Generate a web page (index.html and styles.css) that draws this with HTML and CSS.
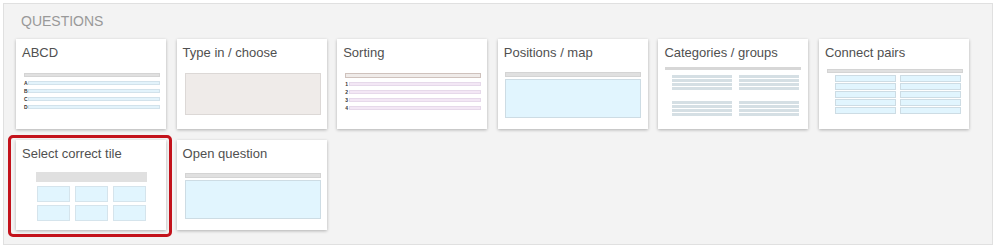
FILE: index.html
```html
<!DOCTYPE html>
<html lang="en">
<head>
  <meta charset="UTF-8" />
  <title>Questions</title>
  <link rel="stylesheet" href="styles.css">
</head>
<body>
  <div class="panel">
    <div class="panel-title">QUESTIONS</div>
    <div class="cards">

      <div class="card">
        <div class="title">ABCD</div>
        <div class="thumb abcd">
          <div class="bar gray"></div>
          <div class="opt"><span>A</span><div class="line blue"></div></div>
          <div class="opt"><span>B</span><div class="line blue"></div></div>
          <div class="opt"><span>C</span><div class="line blue"></div></div>
          <div class="opt"><span>D</span><div class="line blue"></div></div>
        </div>
      </div>

      <div class="card">
        <div class="title">Type in / choose</div>
        <div class="thumb typein">
          <div class="box beige"></div>
        </div>
      </div>

      <div class="card">
        <div class="title">Sorting</div>
        <div class="thumb sorting">
          <div class="bar beige-bar"></div>
          <div class="opt"><span>1</span><div class="line purple"></div></div>
          <div class="opt"><span>2</span><div class="line purple"></div></div>
          <div class="opt"><span>3</span><div class="line purple"></div></div>
          <div class="opt"><span>4</span><div class="line purple"></div></div>
        </div>
      </div>

      <div class="card">
        <div class="title">Positions / map</div>
        <div class="thumb positions">
          <div class="bar gray"></div>
          <div class="box blue-box"></div>
        </div>
      </div>

      <div class="card">
        <div class="title">Categories / groups</div>
        <div class="thumb categories">
          <div class="bar thin-gray"></div>
          <div class="groups">
            <div class="group"><i></i><i></i><i></i><i></i></div>
            <div class="group"><i></i><i></i><i></i><i></i></div>
            <div class="group"><i></i><i></i><i></i><i></i></div>
            <div class="group"><i></i><i></i><i></i><i></i></div>
          </div>
        </div>
      </div>

      <div class="card">
        <div class="title">Connect pairs</div>
        <div class="thumb pairs">
          <div class="bar gray"></div>
          <div class="pair-cols">
            <div class="pair-col"><i></i><i></i><i></i><i></i><i></i></div>
            <div class="pair-col"><i></i><i></i><i></i><i></i><i></i></div>
          </div>
        </div>
      </div>

      <div class="card selected">
        <div class="title">Select correct tile</div>
        <div class="thumb tiles">
          <div class="tile-head"></div>
          <div class="tile-grid">
            <i></i><i></i><i></i><i></i><i></i><i></i>
          </div>
        </div>
      </div>

      <div class="card">
        <div class="title">Open question</div>
        <div class="thumb open">
          <div class="bar gray"></div>
          <div class="box blue-box"></div>
        </div>
      </div>

    </div>
  </div>
</body>
</html>
```

FILE: styles.css
```css
body {
  margin: 0;
  background: #fff;
  font-family: "Liberation Sans", Arial, sans-serif;
}
.panel {
  margin: 3px;
  width: 990px;
  height: 242px;
  box-sizing: border-box;
  background: #f3f3f3;
  border: 1px solid #e0e0e0;
  padding: 9px 12px 0;
}
.panel-title {
  font-size: 14px;
  line-height: 16px;
  color: #999;
  margin: 0 0 10px 5px;
}
.cards {
  display: grid;
  grid-template-columns: repeat(6, 150px);
  column-gap: 10.6px;
  row-gap: 11px;
}
.card {
  position: relative;
  height: 90px;
  box-sizing: border-box;
  background: #fff;
  padding-top: 6px;
  box-shadow: 0 1px 3px rgba(0, 0, 0, 0.28);
}
.card.selected::after {
  content: "";
  position: absolute;
  left: -8px;
  right: -6px;
  top: -5px;
  bottom: -7px;
  border: 3px solid #c3121b;
  border-radius: 5px;
}
.title {
  font-size: 13px;
  line-height: 15px;
  color: #505050;
  padding: 0 5px 0 6px;
}
.thumb {
  margin: 13px 6px 0 8px;
}
.bar {
  box-sizing: border-box;
  height: 4px;
}
.gray {
  background: #e0e0e0;
  border: 1px solid #d4d4d4;
}
.beige-bar {
  height: 5px;
  background: #efebe9;
  border: 1px solid #cfc2bd;
}
.thin-gray {
  height: 3px;
  background: #d7d7d7;
}
.opt {
  display: flex;
  align-items: center;
  margin-top: 4px;
  height: 4px;
}
.opt span {
  width: 4px;
  font-size: 5px;
  font-weight: bold;
  line-height: 4px;
  color: #333;
}
.line {
  flex: 1;
  height: 4px;
  box-sizing: border-box;
}
.blue {
  background: #e3f3fb;
  border: 1px solid #d2e2eb;
}
.purple {
  background: #f3e7f5;
  border: 1px solid #e6d9ea;
}
.box {
  box-sizing: border-box;
}
.beige {
  height: 42px;
  background: #efebe9;
  border: 1px solid #dcd8d6;
}
.blue-box {
  height: 39px;
  margin-top: 2px;
  background: #e1f5fe;
  border: 1px solid #cddce4;
}
.positions .bar {
  height: 5px;
}
.positions {
  margin: 12px 7px 0 7px;
}
.categories {
  margin: 7px 7px 0 7px;
}
.groups {
  display: grid;
  grid-template-columns: 60px 60px;
  column-gap: 7px;
  row-gap: 10px;
  margin: 5px 0 0 7px;
}
.group i {
  display: block;
  height: 3px;
  margin-bottom: 1px;
  background: #d5dfe4;
}
.pairs {
  margin-top: 9px;
}
.pair-cols {
  display: flex;
  gap: 4px;
  margin: 2px 2px 0 8px;
}
.pair-col {
  flex: 1;
}
.pair-col i {
  display: block;
  height: 7px;
  margin-bottom: 1px;
  box-sizing: border-box;
  background: #e1f5fe;
  border: 1px solid #cddce4;
}
.tiles {
  margin: 11px 0 0 20px;
}
.tile-head {
  width: 111px;
  height: 10px;
  background: #e0e0e0;
}
.tile-grid {
  display: grid;
  grid-template-columns: repeat(3, 33px);
  grid-auto-rows: 16px;
  column-gap: 5px;
  row-gap: 3px;
  margin: 4px 0 0 1px;
}
.tile-grid i {
  box-sizing: border-box;
  background: #e1f5fe;
  border: 1px solid #d5e4ec;
}
.open {
  margin-top: 12px;
}
.open .bar {
  height: 5px;
}
.open .blue-box {
  margin-top: 2px;
}
```
